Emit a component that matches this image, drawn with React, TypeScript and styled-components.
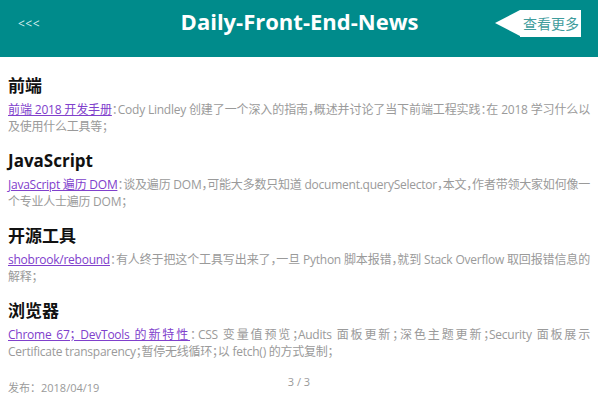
import React from "react";
import styled, { createGlobalStyle } from "styled-components";

const GlobalStyle = createGlobalStyle`
  html, body {
    margin: 0;
    padding: 0;
    background: #ffffff;
    font-family: "Open Sans", "Noto Sans CJK SC", sans-serif;
  }
`;

const Page = styled.div`
  width: 598px;
  height: 400px;
  display: flex;
  flex-direction: column;
  overflow: hidden;
`;

const Header = styled.header`
  flex-shrink: 0;
  height: 57px;
  background-color: #008b8b;
  display: grid;
  grid-template-columns: 90px 1fr 90px;
  align-items: center;
  padding: 0 17px 16px 18px;
  box-sizing: border-box;
`;

const Back = styled.span`
  color: #d8eeee;
  font-size: 12px;
  letter-spacing: 0.5px;
  padding-top: 6px;
`;

const Title = styled.h1`
  margin: 0;
  text-align: center;
  color: #ffffff;
  font-size: 22px;
  font-weight: 700;
`;

const More = styled.a`
  justify-self: end;
  position: relative;
  background: #ffffff;
  color: #3f9c9c;
  font-size: 14px;
  line-height: 27px;
  padding: 0 2px 0 3px;
  margin-top: 5px;
  &::before {
    content: "";
    position: absolute;
    left: -25px;
    top: 0;
    border-style: solid;
    border-width: 13.5px 25px 13.5px 0;
    border-color: transparent #ffffff transparent transparent;
  }
`;

const Content = styled.main`
  padding: 18px 8px 0 8px;
`;

const Section = styled.section`
  margin-bottom: 15px;
  &:last-child {
    margin-bottom: 0;
  }
`;

const Heading = styled.h2`
  margin: 0 0 4px 0;
  font-size: 17px;
  font-weight: 700;
  color: #111111;
  line-height: 22px;
`;

const Summary = styled.p`
  margin: 0;
  font-size: 12px;
  line-height: 17px;
  letter-spacing: -0.25px;
  color: #9a9a9a;
  text-align: justify;
  font-feature-settings: "halt";
`;

const Link = styled.a`
  color: #8040cc;
  text-decoration: underline;
`;

const Footer = styled.footer`
  flex-shrink: 0;
  margin-top: auto;
  position: relative;
  height: 28px;
  box-sizing: border-box;
  padding: 0 8px 4px 8px;
  display: flex;
  align-items: flex-end;
`;

const Date = styled.span`
  font-size: 11px;
  line-height: 16px;
  color: #9a9a9a;
`;

const Pager = styled.span`
  position: absolute;
  left: 50%;
  top: 2px;
  transform: translateX(-50%);
  font-size: 11px;
  line-height: 16px;
  color: #9a9a9a;
`;

const news = [
  {
    topic: "前端",
    title: "前端 2018 开发手册",
    desc: "Cody Lindley 创建了一个深入的指南，概述并讨论了当下前端工程实践：在 2018 学习什么以及使用什么工具等；",
  },
  {
    topic: "JavaScript",
    title: "JavaScript 遍历 DOM",
    desc: "谈及遍历 DOM，可能大多数只知道 document.querySelector，本文，作者带领大家如何像一个专业人士遍历 DOM；",
  },
  {
    topic: "开源工具",
    title: "shobrook/rebound",
    desc: "有人终于把这个工具写出来了，一旦 Python 脚本报错，就到 Stack Overflow 取回报错信息的解释；",
  },
  {
    topic: "浏览器",
    title: "Chrome 67； DevTools 的新特性",
    // nbsp keeps "Certificate transparency" together on the second line
    desc: "CSS 变量值预览；Audits 面板更新；深色主题更新；Security 面板展示 Certificate\u00a0transparency；暂停无线循环；以 fetch() 的方式复制；",
  },
];

export default function App() {
  return (
    <>
      <GlobalStyle />
      <Page>
        <Header>
          <Back>&lt;&lt;&lt;</Back>
          <Title>Daily-Front-End-News</Title>
          <More>查看更多</More>
        </Header>
        <Content>
          {news.map((item) => (
            <Section key={item.topic}>
              <Heading>{item.topic}</Heading>
              <Summary>
                <Link href="#">{item.title}</Link>：{item.desc}
              </Summary>
            </Section>
          ))}
        </Content>
        <Footer>
          <Date>发布：2018/04/19</Date>
          <Pager>3 / 3</Pager>
        </Footer>
      </Page>
    </>
  );
}
